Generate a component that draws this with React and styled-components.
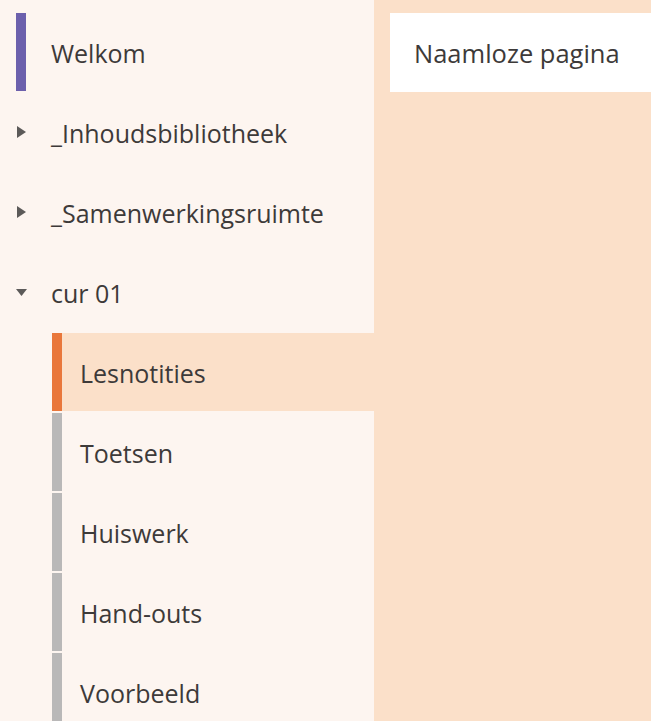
import React from 'react';
import styled, { createGlobalStyle } from 'styled-components';

const GlobalStyle = createGlobalStyle`
	html, body {
		margin: 0;
		padding: 0;
		background: #fbe0c9;
	}
	body {
		font-family: 'Open Sans', 'Noto Sans', sans-serif;
		color: #3d3a39;
	}
`;

const Shell = styled.div`
	display: flex;
	height: 721px;
	overflow: hidden;
`;

const Sidebar = styled.nav`
	width: 374px;
	flex-shrink: 0;
	background: #fdf5f0;
	padding-top: 13px;
	box-sizing: border-box;
`;

const Main = styled.main`
	flex: 1;
	background: #fbe0c9;
	padding: 13px 0 0 16px;
`;

const PageCard = styled.div`
	height: 79px;
	background: #ffffff;
	display: flex;
	align-items: center;
	padding-left: 24px;
	font-size: 25.5px;
	white-space: nowrap;
`;

const Row = styled.div`
	display: flex;
	align-items: center;
	height: 78px;
	margin-bottom: 2px;
	margin-left: ${p => (p.$child ? '52px' : '16px')};
	background: ${p => (p.$active ? '#fbe0c9' : 'transparent')};
	font-size: 25px;
	white-space: nowrap;
`;

const Marker = styled.span`
	width: 10px;
	align-self: stretch;
	flex-shrink: 0;
	background: ${p => p.$color};
`;

const Toggle = styled.span`
	width: 10px;
	flex-shrink: 0;
	display: flex;
	svg {
		display: block;
	}
`;

const Label = styled.span`
	padding-left: ${p => (p.$child ? '18px' : '25px')};
	padding-top: 1px;
`;

const Caret = ({ open }) => (
	<svg width="12" height="14" viewBox="0 0 12 14" style={{ flexShrink: 0 }}>
		{open ? (
			<path d="M0 4 L11 4 L5.5 11 Z" fill="#5c5a59" />
		) : (
			<path d="M1 1 L10 7 L1 13 Z" fill="#5c5a59" />
		)}
	</svg>
);

const sections = [
	{ name: '_Inhoudsbibliotheek', open: false },
	{ name: '_Samenwerkingsruimte', open: false },
	{ name: 'cur 01', open: true },
];

const pages = ['Lesnotities', 'Toetsen', 'Huiswerk', 'Hand-outs', 'Voorbeeld'];

const App = () => (
	<>
		<GlobalStyle />
		<Shell>
			<Sidebar>
				<Row>
					<Marker $color="#6c60ac" />
					<Label>Welkom</Label>
				</Row>
				{sections.map(s => (
					<Row key={s.name}>
						<Toggle>
							<Caret open={s.open} />
						</Toggle>
						<Label>{s.name}</Label>
					</Row>
				))}
				{pages.map((p, i) => (
					<Row key={p} $child $active={i === 0}>
						<Marker $color={i === 0 ? '#e9773b' : '#b9b8b8'} />
						<Label $child>{p}</Label>
					</Row>
				))}
			</Sidebar>
			<Main>
				<PageCard>Naamloze pagina</PageCard>
			</Main>
		</Shell>
	</>
);

export default App;
